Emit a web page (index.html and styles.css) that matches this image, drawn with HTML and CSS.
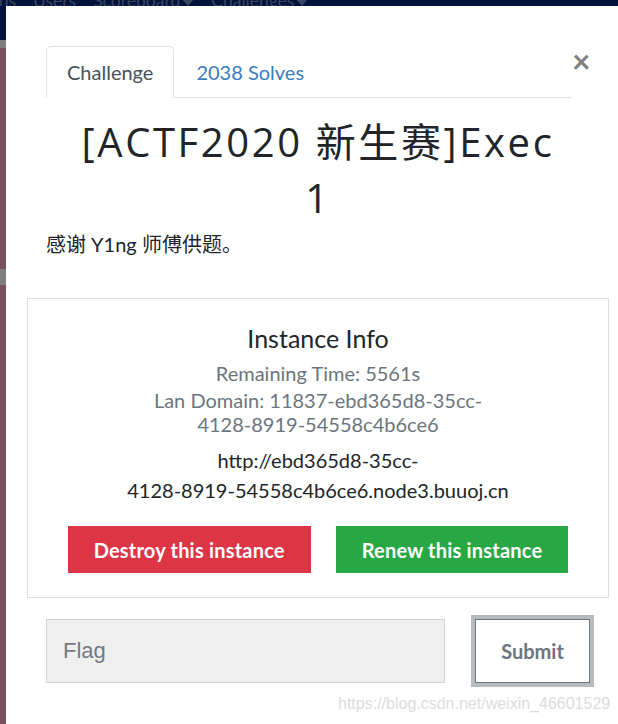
FILE: index.html
```html
<!DOCTYPE html>
<html lang="zh">
<head>
<meta charset="utf-8">
<title>Challenge</title>
<link rel="stylesheet" href="styles.css">
</head>
<body>
<div class="page">
  <nav class="topnav">
    <span class="nav-item first">Notifications</span>
    <span class="nav-item">Users</span>
    <span class="nav-item">Scoreboard<span class="caret"></span></span>
    <span class="nav-item">Challenges<span class="caret"></span></span>
  </nav>
  <div class="backdrop-strip">
    <div class="band band-navy"></div>
    <div class="band band-gray"></div>
    <div class="band band-maroon"></div>
    <div class="band band-gray2"></div>
    <div class="band band-maroon band-fill"></div>
  </div>
  <div class="modal">
    <div class="modal-body">
      <div class="tabs-row">
        <ul class="nav-tabs">
          <li class="tab active">Challenge</li>
          <li class="tab"><a class="tab-link">2038 Solves</a></li>
        </ul>
        <button class="close" type="button">×</button>
      </div>
      <h2 class="challenge-name">[ACTF2020 新生赛]Exec 1</h2>
      <p class="desc">感谢 Y1ng 师傅供题。</p>
      <div class="instance">
        <h4 class="instance-title">Instance Info</h4>
        <div class="info">
          <div class="muted first-muted">Remaining Time: 5561s</div>
          <div class="muted second-muted">Lan Domain: 11837-ebd365d8-35cc-<wbr><span class="nobr">4128-8919-54558c4b6ce6</span></div>
          <p class="url">http://ebd365d8-35cc-<wbr><span class="nobr">4128-8919-54558c4b6ce6.node3.buuoj.cn</span></p>
        </div>
        <div class="actions">
          <button class="btn btn-danger" type="button">Destroy this instance</button>
          <button class="btn btn-success" type="button">Renew this instance</button>
        </div>
      </div>
      <div class="submit-row">
        <input class="flag-input" type="text" placeholder="Flag">
        <button class="submit" type="button">Submit</button>
      </div>
    </div>
  </div>
  <div class="watermark">https://blog.csdn.net/weixin_46601529</div>
</div>
</body>
</html>
```

FILE: styles.css
```css
html, body {
  margin: 0;
  padding: 0;
  background: #ffffff;
}

body {
  font-family: Lato, "Noto Sans CJK SC", sans-serif;
  color: #212529;
  overflow: hidden;
}

.page {
  position: relative;
  display: grid;
  grid-template-columns: 6px 612px;
  grid-template-rows: 6px 718px;
  width: 618px;
  height: 724px;
  overflow: hidden;
}

/* dimmed navbar behind the modal */
.topnav {
  grid-column: 1 / 3;
  background: #00133a;
  overflow: hidden;
  display: flex;
  align-items: flex-start;
  gap: 17px;
  font-size: 17.5px;
  line-height: 18px;
  color: #3b4560;
  white-space: nowrap;
}

.nav-item {
  margin-top: -8px;
  display: inline-flex;
  align-items: center;
}

.nav-item.first {
  width: 16px;
  justify-content: flex-end;
}

.caret {
  display: inline-block;
  width: 0;
  height: 0;
  margin-left: 2px;
  margin-top: 2px;
  border-left: 6px solid transparent;
  border-right: 6px solid transparent;
  border-top: 7px solid #3b4560;
}

/* page behind the modal backdrop */
.backdrop-strip {
  display: flex;
  flex-direction: column;
}

.band-navy { height: 34px; background: #00133a; }
.band-gray { height: 8px; background: #7e7e7e; }
.band-maroon { height: 221px; background: #7a5061; }
.band-gray2 { height: 16px; background: #7d7e7c; }
.band-fill { flex: 1; }

/* modal */
.modal {
  width: 624px;
  background: #ffffff;
}

.modal-body {
  padding: 40px 40px;
}

.tabs-row {
  display: flex;
  align-items: flex-start;
}

.nav-tabs {
  flex: 1;
  display: flex;
  margin: 0;
  padding: 0;
  list-style: none;
  border-bottom: 1px solid #dee2e6;
}

.tab {
  padding: 10px 20px;
  border: 1px solid transparent;
  border-radius: 5px 5px 0 0;
  margin-bottom: -1px;
  font-size: 20px;
  line-height: 30px;
}

.tab.active {
  color: #495057;
  border-color: #dee2e6 #dee2e6 #ffffff;
  background: #ffffff;
}

.tab + .tab {
  margin-left: 1px;
}

.tab-link {
  color: #3a7cc0;
}

.close {
  width: 18px;
  padding: 0;
  margin: -1px 0 0 0;
  border: 0;
  background: none;
  font-family: Lato, sans-serif;
  font-size: 32px;
  font-weight: 700;
  line-height: 32px;
  color: #808080;
}

.challenge-name {
  margin: 16px 0 0;
  padding: 0 27px;
  font-family: "Open Sans", "Noto Sans CJK SC", sans-serif;
  font-weight: 400;
  font-size: 40px;
  line-height: 56px;
  letter-spacing: 2.6px;
  text-align: center;
  color: #212529;
}

.desc {
  margin: 3px 0 0;
  font-size: 20px;
  line-height: 30px;
}

.instance {
  margin: 39px -19px 0;
  border: 1px solid #dddddd;
  padding: 24px 0;
  text-align: center;
}

.instance-title {
  margin: 0;
  font-size: 25px;
  font-weight: 400;
  line-height: 30px;
}

.info {
  width: 460px;
  margin: 0 auto;
}

.nobr {
  white-space: nowrap;
}

.muted {
  color: #6c757d;
  font-size: 20px;
  line-height: 24px;
}

.first-muted { margin-top: 8px; }
.second-muted { margin-top: 3px; }

.url {
  margin: 9px 0 0;
  font-size: 20px;
  line-height: 30px;
}

.actions {
  margin-top: 21px;
  display: flex;
  justify-content: center;
  gap: 25px;
}

.btn {
  height: 47px;
  padding: 0 26px;
  border: 0;
  border-radius: 0;
  font-family: Lato, sans-serif;
  font-weight: 700;
  font-size: 20px;
  letter-spacing: 0.2px;
  color: #ffffff;
}

.btn-danger { background: #dc3545; }
.btn-success { background: #28a745; }

.submit-row {
  margin-top: 21px;
  display: flex;
  gap: 30px;
}

.flag-input {
  flex: 1;
  min-width: 0;
  height: 64px;
  box-sizing: border-box;
  padding: 0 16px;
  border: 1px solid #d0d3d7;
  border-radius: 0;
  background: #efefef;
  font-family: "Liberation Sans", Arial, sans-serif;
  font-size: 22px;
  color: #495057;
}

.flag-input::placeholder {
  color: #737a82;
}

.submit {
  width: 115px;
  height: 64px;
  box-sizing: border-box;
  border: 1px solid #6c757d;
  border-radius: 0;
  background: #ffffff;
  box-shadow: 0 0 0 4px #b6bbc0;
  font-family: Lato, sans-serif;
  font-weight: 700;
  font-size: 20px;
  color: #6c757d;
}

.watermark {
  position: absolute;
  left: 338px;
  top: 695px;
  font-family: "Liberation Sans", Arial, sans-serif;
  font-size: 16px;
  color: #dcdcdc;
  white-space: nowrap;
}
```
